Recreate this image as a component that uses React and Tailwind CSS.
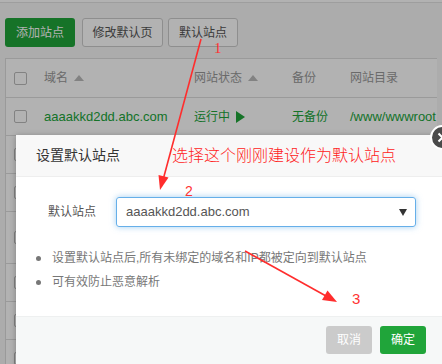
import React from "react";

const sans = "font-['Liberation_Sans','Noto_Sans_CJK_SC',sans-serif]";

const Checkbox = () => (
  <span className="block w-[13px] h-[13px] rounded-[2px] border border-[#bbb] bg-white" />
);

const SortUp = () => (
  <span className="ml-[6px] inline-block w-0 h-0 border-x-[5px] border-x-transparent border-b-[6px] border-b-[#bbb]" />
);

const extraRows = [38, 38, 52, 38, 38, 38];

const App = () => {
  return (
    <div className={`relative w-[442px] h-[364px] overflow-hidden bg-[#f7f7f7] ${sans}`}>
      {/* page behind the dialog */}
      <div className="h-[3px] bg-white border-b border-[#e2e2e2]" />
      <div className="px-[5px] pt-[15px]">
        <div className="flex items-center">
          <button className="h-[29px] w-[70px] rounded-[3px] bg-[#20a53a] text-white text-[12px]">
            添加站点
          </button>
          <button className="ml-[7px] h-[29px] w-[81px] rounded-[3px] border border-[#ccc] bg-white text-[#555] text-[12px]">
            修改默认页
          </button>
          <button className="ml-[5px] h-[29px] w-[70px] rounded-[3px] border border-[#ccc] bg-white text-[#555] text-[12px]">
            默认站点
          </button>
        </div>

        <div className="mt-[11px] border-l border-t border-[#ddd] bg-white">
          <div className="flex items-center h-[39px] border-b border-[#ddd] text-[12px] text-[#999] overflow-hidden whitespace-nowrap">
            <div className="w-[38px] shrink-0 pl-[8px]">
              <Checkbox />
            </div>
            <div className="w-[150px] shrink-0 flex items-center">
              域名
              <SortUp />
            </div>
            <div className="w-[98px] shrink-0 flex items-center">
              网站状态
              <SortUp />
            </div>
            <div className="w-[58px] shrink-0">备份</div>
            <div className="shrink-0">网站目录</div>
          </div>

          <div className="flex items-center h-[38px] border-b border-[#ddd] text-[#20a53a] overflow-hidden whitespace-nowrap">
            <div className="w-[38px] shrink-0 pl-[8px]">
              <Checkbox />
            </div>
            <div className="w-[150px] shrink-0 text-[13px]">aaaakkd2dd.abc.com</div>
            <div className="w-[98px] shrink-0 text-[12px] flex items-center">
              运行中
              <span className="ml-[6px] inline-block w-0 h-0 border-y-[6px] border-y-transparent border-l-[9px] border-l-[#20a53a]" />
            </div>
            <div className="w-[58px] shrink-0 text-[12px]">无备份</div>
            <div className="shrink-0 text-[13px]">/www/wwwroot</div>
          </div>

          {extraRows.map((h, i) => (
            <div
              key={i}
              className="flex items-center border-b border-[#ddd]"
              style={{ height: h }}
            >
              <div className="w-[38px] pl-[8px]">
                <Checkbox />
              </div>
            </div>
          ))}
        </div>
      </div>

      {/* shade */}
      <div className="absolute inset-0 bg-black/30" />

      {/* dialog */}
      <div className="absolute left-[16px] top-[135px] w-[426px] bg-white shadow-[0_1px_6px_rgba(0,0,0,0.3)]">
        <div className="h-[42px] flex items-center px-[20px] bg-[#f8f8f8] border-b border-[#eee] text-[14px] text-[#333]">
          设置默认站点
        </div>

        <div className="pt-[20px] pb-[22px]">
          <div className="flex items-center">
            <div className="w-[80px] text-right text-[12px] text-[#555]">默认站点</div>
            <div className="ml-[20px] w-[300px] h-[30px] flex items-center justify-between pl-[9px] pr-[8px] rounded-[3px] border border-[#66afe9] shadow-[0_0_6px_rgba(102,175,233,0.6)] text-[13px] text-[#555]">
              <span>aaaakkd2dd.abc.com</span>
              <span className="inline-block w-0 h-0 border-x-[4px] border-x-transparent border-t-[7px] border-t-[#333]" />
            </div>
          </div>

          <ul className="mt-[19px] text-[12px] text-[#777]">
            <li className="h-[24px] flex items-center pl-[20px]">
              <span className="w-[5px] h-[5px] rounded-full bg-[#777]" />
              <span className="ml-[11px]">设置默认站点后,所有未绑定的域名和IP都被定向到默认站点</span>
            </li>
            <li className="h-[24px] flex items-center pl-[20px]">
              <span className="w-[5px] h-[5px] rounded-full bg-[#777]" />
              <span className="ml-[11px]">可有效防止恶意解析</span>
            </li>
          </ul>
        </div>

        <div className="h-[60px] flex justify-end gap-[8px] pt-[9px] pr-[16px] bg-[#f6f8f8] border-t border-[#eef0f0]">
          <button className="h-[28px] w-[46px] rounded-[3px] bg-[#cbcbcb] text-white text-[12px]">取消</button>
          <button className="h-[28px] w-[46px] rounded-[3px] bg-[#20a53a] text-white text-[12px]">确定</button>
        </div>
      </div>

      {/* close icon */}
      <div className="absolute left-[430px] top-[125px] w-[25px] h-[25px] rounded-full bg-[#4a4a4a] border-2 border-white flex items-center justify-center">
        <svg width="11" height="11" viewBox="0 0 11 11">
          <path d="M1.5 1.5 L9.5 9.5 M9.5 1.5 L1.5 9.5" stroke="#fff" strokeWidth="2" />
        </svg>
      </div>

      {/* red annotations */}
      <svg className="absolute inset-0 pointer-events-none" width="442" height="364">
        <line x1="201" y1="39" x2="163" y2="180" stroke="#ff2d2d" strokeWidth="1.6" />
        <polygon points="160,190 168.5,177.5 158.5,175" fill="#ff2d2d" />
        <line x1="245" y1="251" x2="326" y2="296" stroke="#ff2d2d" strokeWidth="1.6" />
        <polygon points="337,302 322,300 327.5,290.5" fill="#ff2d2d" />
      </svg>
      <span className="absolute left-[214px] top-[41px] text-[15px] leading-none text-[#ff3333] font-['Liberation_Serif',serif]">
        1
      </span>
      <span className="absolute left-[185px] top-[184px] text-[14px] leading-none text-[#ff3333]">2</span>
      <span className="absolute left-[352px] top-[291px] text-[15px] leading-none text-[#ff3333]">3</span>
      <span className="absolute left-[172px] top-[148px] text-[16px] leading-none font-light text-[#ff2222] whitespace-nowrap">
        选择这个刚刚建设作为默认站点
      </span>
    </div>
  );
};

export default App;
